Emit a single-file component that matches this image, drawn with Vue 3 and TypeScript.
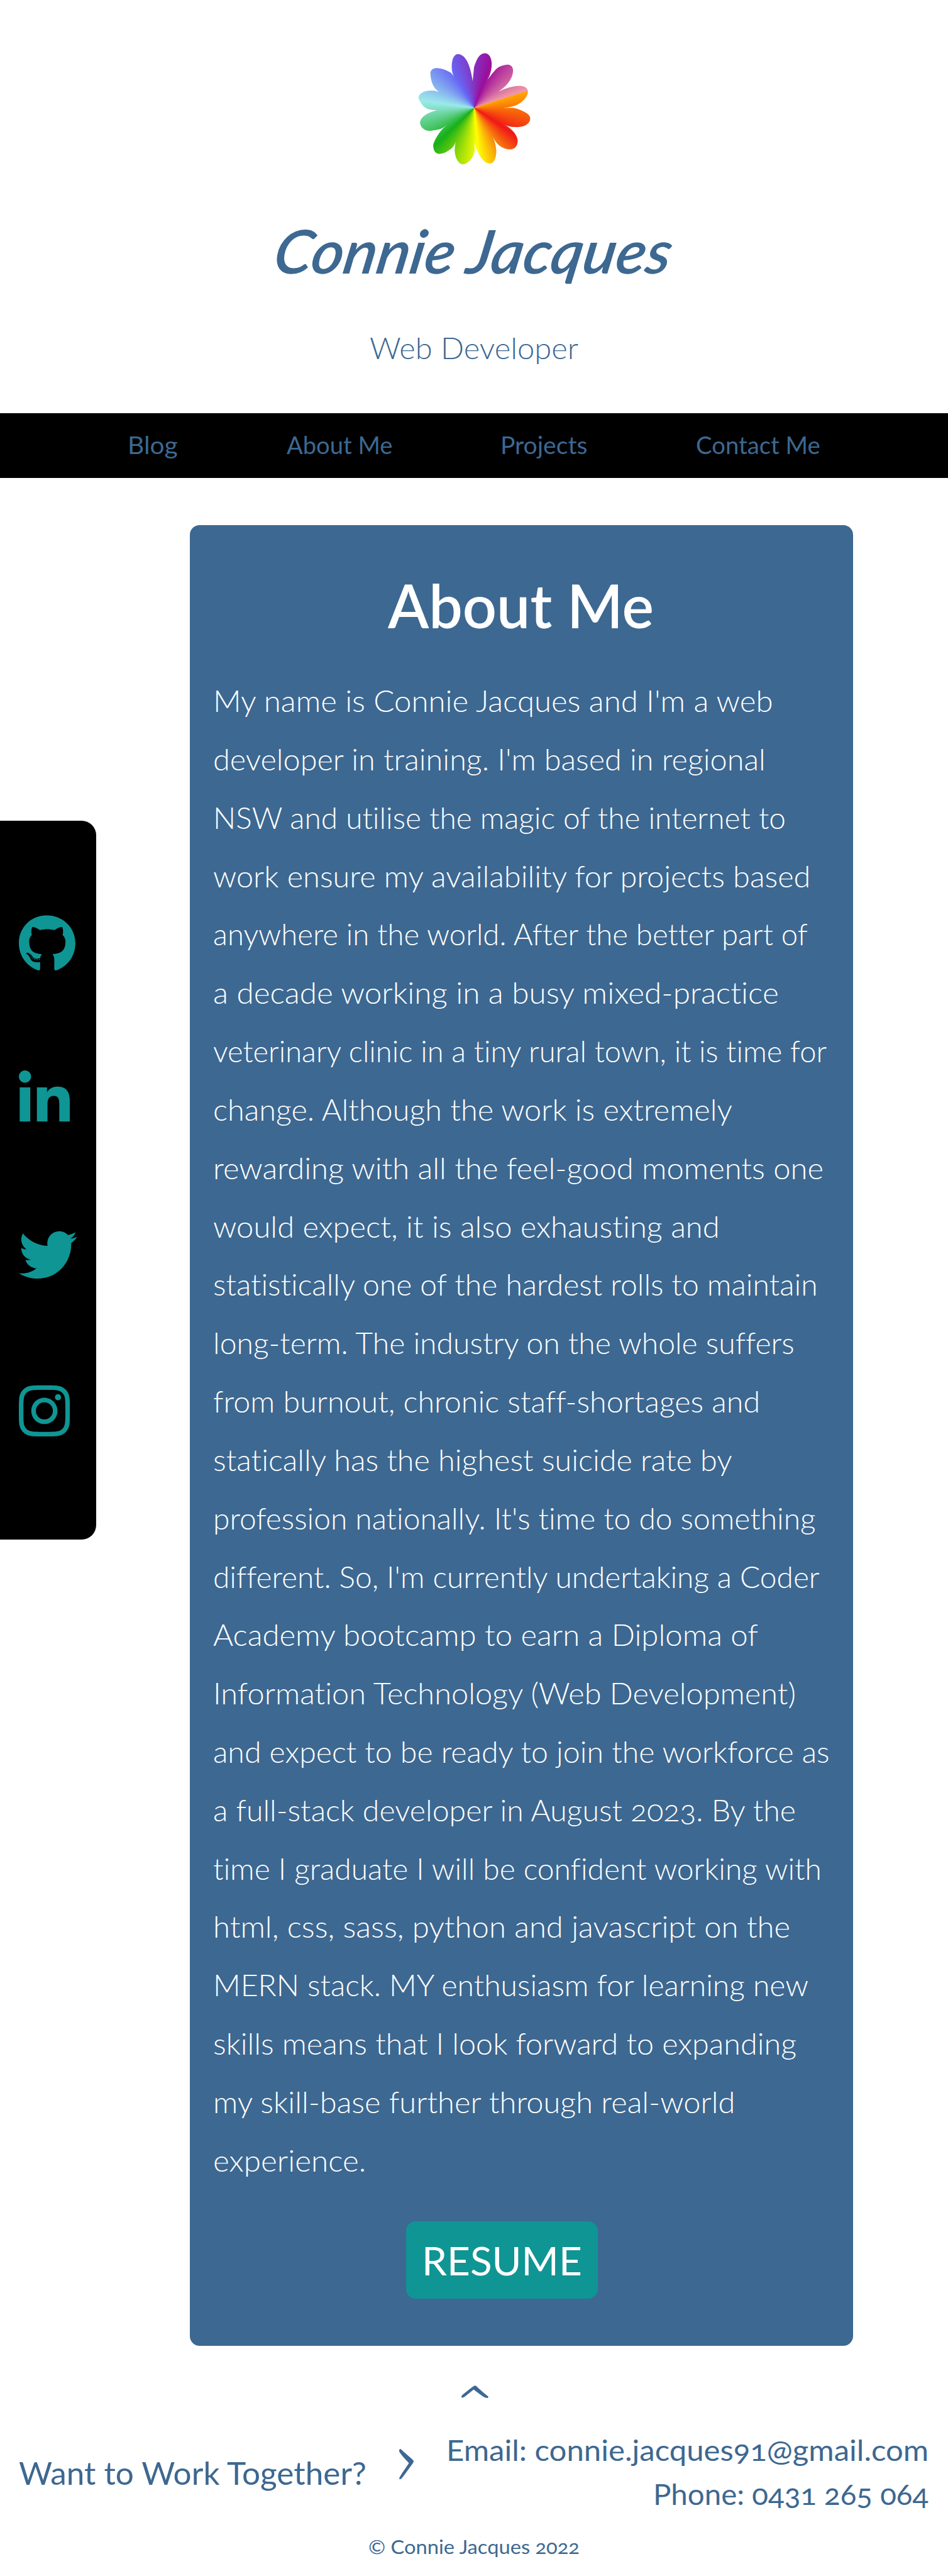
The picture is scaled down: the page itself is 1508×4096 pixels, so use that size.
<script setup lang="ts">
import type { Directive } from 'vue'

interface Line {
  text: string
  width: number
}

interface Social {
  name: string
  viewBox: string
  width: number
  path: string
}

// Widens (or narrows) the letters of a run of text so that it fills the given measure.
const vFit: Directive<HTMLElement, number> = {
  mounted(el, binding) {
    const natural = el.offsetWidth
    el.style.width = `${binding.value}px`
    el.style.transform = `scaleX(${(binding.value / natural).toFixed(4)})`
  },
}

const nav: Line[] = [
  { text: 'Blog', width: 80 },
  { text: 'About Me', width: 168 },
  { text: 'Projects', width: 138 },
  { text: 'Contact Me', width: 198 },
]

const about: Line[] = [
  { text: "My name is Connie Jacques and I'm a web", width: 891 },
  { text: "developer in training. I'm based in regional", width: 879 },
  { text: 'NSW and utilise the magic of the internet to', width: 911 },
  { text: 'work ensure my availability for projects based', width: 950 },
  { text: 'anywhere in the world. After the better part of', width: 946 },
  { text: 'a decade working in a busy mixed-practice', width: 900 },
  { text: 'veterinary clinic in a tiny rural town, it is time for', width: 976 },
  { text: 'change. Although the work is extremely', width: 826 },
  { text: 'rewarding with all the feel-good moments one', width: 971 },
  { text: 'would expect, it is also exhausting and', width: 806 },
  { text: 'statistically one of the hardest rolls to maintain', width: 962 },
  { text: 'long-term. The industry on the whole suffers', width: 925 },
  { text: 'from burnout, chronic staff-shortages and', width: 870 },
  { text: 'statically has the highest suicide rate by', width: 826 },
  { text: "profession nationally. It's time to do something", width: 959 },
  { text: "different. So, I'm currently undertaking a Coder", width: 965 },
  { text: 'Academy bootcamp to earn a Diploma of', width: 867 },
  { text: 'Information Technology (Web Development)', width: 927 },
  { text: 'and expect to be ready to join the workforce as', width: 981 },
  { text: 'a full-stack developer in August 2023. By the', width: 927 },
  { text: 'time I graduate I will be confident working with', width: 968 },
  { text: 'html, css, sass, python and javascript on the', width: 918 },
  { text: 'MERN stack. MY enthusiasm for learning new', width: 947 },
  { text: 'skills means that I look forward to expanding', width: 928 },
  { text: 'my skill-base further through real-world', width: 830 },
  { text: 'experience.', width: 243 },
]

const socials: Social[] = [
  {
    name: 'GitHub',
    viewBox: '0 0 496 512',
    width: 89.9,
    path: 'M165.9 397.4c0 2-2.3 3.6-5.2 3.6-3.3.3-5.6-1.3-5.6-3.6 0-2 2.3-3.6 5.2-3.6 3-.3 5.6 1.3 5.6 3.6zm-31.1-4.5c-.7 2 1.3 4.3 4.3 4.9 2.6 1 5.6 0 6.2-2s-1.3-4.3-4.3-5.2c-2.6-.7-5.5.3-6.2 2.3zm44.2-1.7c-2.9.7-4.9 2.6-4.6 4.9.3 2 2.9 3.3 5.9 2.6 2.9-.7 4.9-2.6 4.6-4.6-.3-1.9-3-3.2-5.9-2.9zM244.8 8C106.1 8 0 113.3 0 252c0 110.9 69.8 205.8 169.5 239.2 12.8 2.3 17.3-5.6 17.3-12.1 0-6.2-.3-40.4-.3-61.4 0 0-70 15-84.7-29.8 0 0-11.4-29.1-27.8-36.6 0 0-22.9-15.7 1.6-15.4 0 0 24.9 2 38.6 25.8 21.9 38.6 58.6 27.5 72.9 20.9 2.3-16 8.8-27.1 16-33.7-55.9-6.2-112.3-14.3-112.3-110.5 0-27.5 7.6-41.3 23.6-58.9-2.6-6.5-11.1-33.3 2.6-67.9 20.9-6.5 69 27 69 27 20-5.6 41.5-8.5 62.8-8.5s42.8 2.9 62.8 8.5c0 0 48.1-33.6 69-27 13.7 34.7 5.2 61.4 2.6 67.9 16 17.7 25.8 31.5 25.8 58.9 0 96.5-58.9 104.2-114.8 110.5 9.2 7.9 17 22.9 17 46.4 0 33.7-.3 75.4-.3 83.6 0 6.5 4.6 14.4 17.3 12.1C428.2 457.8 496 362.9 496 252 496 113.3 383.5 8 244.8 8zM97.2 352.9c-1.3 1-1 3.3.7 5.2 1.6 1.6 3.9 2.3 5.2 1 1.3-1 1-3.3-.7-5.2-1.6-1.6-3.9-2.3-5.2-1zm-10.8-8.1c-.7 1.3.3 2.9 2.3 3.9 1.6 1 3.6.7 4.3-.7.7-1.3-.3-2.9-2.3-3.9-2-.6-3.6-.3-4.3.7zm32.4 35.6c-1.6 1.3-1 4.3 1.3 6.2 2.3 2.3 5.2 2.6 6.5 1 1.3-1.3.7-4.3-1.3-6.2-2.2-2.3-5.2-2.6-6.5-1zm-11.4-14.7c-1.6 1-1.6 3.6 0 5.9 1.6 2.3 4.3 3.3 5.6 2.3 1.6-1.3 1.6-3.9 0-6.2-1.4-2.3-4-3.3-5.6-2z',
  },
  {
    name: 'LinkedIn',
    viewBox: '0 0 448 512',
    width: 81.2,
    path: 'M100.28 448H7.4V148.9h92.88zM53.79 108.1C24.09 108.1 0 83.5 0 53.8a53.79 53.79 0 0 1 107.58 0c0 29.7-24.1 54.3-53.79 54.3zM447.9 448h-92.68V302.4c0-34.7-.7-79.2-48.29-79.2-48.29 0-55.69 37.7-55.69 76.7V448h-92.78V148.9h89.08v40.8h1.3c12.4-23.5 42.69-48.3 87.88-48.3 94 0 111.28 61.9 111.28 142.3V448z',
  },
  {
    name: 'Twitter',
    viewBox: '0 0 512 512',
    width: 92.8,
    path: 'M459.37 151.716c.325 4.548.325 9.097.325 13.645 0 138.72-105.583 298.558-298.558 298.558-59.452 0-114.68-17.219-161.137-47.106 8.447.974 16.568 1.299 25.34 1.299 49.055 0 94.213-16.568 130.274-44.832-46.132-.975-84.792-31.188-98.112-72.772 6.498.974 12.995 1.624 19.818 1.624 9.421 0 18.843-1.3 27.614-3.573-48.081-9.747-84.143-51.98-84.143-102.985v-1.299c13.969 7.797 30.214 12.67 47.431 13.319-28.264-18.843-46.781-51.005-46.781-87.391 0-19.492 5.197-37.36 14.294-52.954 51.655 63.675 129.3 105.258 216.365 109.807-1.624-7.797-2.599-15.918-2.599-24.04 0-57.828 46.782-104.934 104.934-104.934 30.213 0 57.502 12.67 76.67 33.137 23.715-4.548 46.456-13.32 66.599-25.34-7.798 24.366-24.366 44.833-46.132 57.827 21.117-2.273 41.584-8.122 60.426-16.243-14.292 20.791-32.161 39.308-52.628 54.253z',
  },
  {
    name: 'Instagram',
    viewBox: '0 0 448 512',
    width: 81.2,
    path: 'M224.1 141c-63.6 0-114.9 51.3-114.9 114.9s51.3 114.9 114.9 114.9S339 319.5 339 255.9 287.7 141 224.1 141zm0 189.6c-41.1 0-74.7-33.5-74.7-74.7s33.5-74.7 74.7-74.7 74.7 33.5 74.7 74.7-33.6 74.7-74.7 74.7zm146.4-194.3c0 14.9-12 26.8-26.8 26.8-14.9 0-26.8-12-26.8-26.8s12-26.8 26.8-26.8 26.8 12 26.8 26.8zm76.1 27.2c-1.7-35.9-9.9-67.7-36.2-93.9-26.2-26.2-58-34.4-93.9-36.2-37-2.1-147.9-2.1-184.9 0-35.8 1.7-67.6 9.9-93.9 36.1s-34.4 58-36.2 93.9c-2.1 37-2.1 147.9 0 184.9 1.7 35.9 9.9 67.7 36.2 93.9s58 34.4 93.9 36.2c37 2.1 147.9 2.1 184.9 0 35.9-1.7 67.7-9.9 93.9-36.2 26.2-26.2 34.4-58 36.2-93.9 2.1-37 2.1-147.8 0-184.8zM398.8 388c-7.8 19.6-22.9 34.7-42.6 42.6-29.5 11.7-99.5 9-132.1 9s-102.7 2.6-132.1-9c-19.6-7.8-34.7-22.9-42.6-42.6-11.7-29.5-9-99.5-9-132.1s-2.6-102.7 9-132.1c7.8-19.6 22.9-34.7 42.6-42.6 29.5-11.7 99.5-9 132.1-9s102.7-2.6 132.1 9c19.6 7.8 34.7 22.9 42.6 42.6 11.7 29.5 9 99.5 9 132.1s2.7 102.7-9 132.1z',
  },
]
</script>

<template>
  <div class="page">
    <header class="header">
      <svg class="logo" viewBox="0 0 1140 1020" aria-label="Logo">
        <defs>
          <clipPath id="petals">
            <path
              d="M558 303C562 270 565 230 568 200C580 165 600 95 650 95C690 98 699 150 699 175C699 215 690 255 668 293C700 250 730 210 755 197C780 186 800 181 820 180C845 183 860 200 857 235C850 275 835 300 815 322C800 345 770 362 752 382C780 362 850 337 905 337C945 337 967 355 967 380C967 405 955 420 945 433C915 465 890 478 870 484C840 495 810 498 787 502C820 500 840 500 860 501C900 508 940 528 965 545C980 558 985 570 985 582C980 615 955 628 935 636C910 643 890 645 870 643C840 641 820 635 797 628C830 640 880 690 888 725C900 765 880 808 833 808C770 805 730 765 705 710C725 755 733 790 733 830C730 880 715 912 683 913C640 912 605 850 595 820C582 800 575 775 572 750C572 780 574 800 573 820C562 870 530 915 483 919C440 910 425 850 425 810C426 785 430 760 437 738C430 770 410 800 385 812C360 832 335 840 308 841C270 835 266 800 266 770C280 730 300 700 325 668C340 650 355 635 375 620C350 640 335 650 320 657C300 662 270 670 240 671C195 670 168 640 168 605C175 575 200 555 230 540C265 523 310 510 345 507C310 515 285 518 265 517C225 512 200 500 180 470C165 450 157 435 157 420C165 395 190 378 240 373C280 372 310 380 350 402C320 395 290 370 275 350C255 320 245 280 245 240C250 215 270 205 295 206C340 210 370 225 395 240C415 258 425 280 440 310C425 285 403 245 403 200C403 140 420 103 450 103C490 105 515 145 530 185C543 220 552 260 558 303Z"
            />
          </clipPath>
        </defs>
        <g clip-path="url(#petals)">
          <foreignObject x="0" y="0" width="1140" height="1020">
            <div class="wheel"></div>
          </foreignObject>
        </g>
      </svg>
      <h1 class="name"><span v-fit="632">Connie Jacques</span></h1>
      <p class="role"><span v-fit="332">Web Developer</span></p>
    </header>

    <nav class="nav">
      <a v-for="item in nav" :key="item.text"><span v-fit="item.width">{{ item.text }}</span></a>
    </nav>

    <main class="main">
      <aside class="social">
        <svg
          v-for="s in socials"
          :key="s.name"
          :viewBox="s.viewBox"
          :width="s.width"
          height="92.8"
          :aria-label="s.name"
        >
          <path :d="s.path" />
        </svg>
      </aside>

      <section class="card">
        <h2 class="title"><span v-fit="423">About Me</span></h2>
        <p class="about">
          <span v-for="line in about" :key="line.text" v-fit="line.width" class="line">{{ line.text }}</span>
        </p>
        <a class="resume"><span v-fit="255">RESUME</span></a>
      </section>
    </main>

    <footer class="footer">
      <svg class="up" viewBox="0 0 67 31">
        <path d="M1 30C-1 28 0 26 3 23C12 15 23 7 31 1Q34-1 37 2C45 10 56 19 66 27Q67 30 65 31C60 31 55 29 50 25L30 10C22 17 14 23 8 28Q4 31 1 30Z" />
      </svg>
      <div class="contact">
        <p class="ask"><span v-fit="553">Want to Work Together?</span></p>
        <svg class="next" viewBox="0 0 36 75">
          <path d="M3 0C0 1-1 4 1 8C7 18 17 26 24 35C16 47 8 58 1 70Q-1 75 2 75C5 75 7 71 10 68L34 35Q37 30 34 27C24 17 13 9 5 1Z" />
        </svg>
        <div class="details">
          <p><span v-fit="767">Email: connie.jacques91@gmail.com</span></p>
          <p><span v-fit="438">Phone: 0431 265 064</span></p>
        </div>
      </div>
      <p class="copyright"><span v-fit="336">© Connie Jacques 2022</span></p>
    </footer>
  </div>
</template>

<style>
body {
  margin: 0;
  background: #fff;
}
</style>

<style scoped>
.page {
  width: 1508px;
  height: 4096px;
  overflow: hidden;
  background: #fff;
  color: #3d6891;
  font-family: Lato, 'Open Sans', sans-serif;
  font-variant-ligatures: none;
  font-variant-numeric: oldstyle-nums;
}

h1,
h2,
p {
  margin: 0;
  font-weight: 400;
}

span {
  display: inline-block;
  text-align: left;
  transform-origin: 0 50%;
  white-space: nowrap;
}

.header {
  display: flex;
  flex-direction: column;
  align-items: center;
  box-sizing: border-box;
  height: 656.5px;
  padding-top: 64.4px;
}

.logo {
  flex: none;
  width: 244.9px;
  height: 219.1px;
}

.wheel {
  width: 1140px;
  height: 1020px;
  background: conic-gradient(
    from 72.2deg at 570px 501px,
    #ffa500 0deg,
    #f01717 51.4deg,
    #ffff00 102.9deg,
    #17b017 154.3deg,
    #9be9ea 205.7deg,
    #6666f5 257.1deg,
    #9b0d9b 308.6deg,
    #f29ba5 360deg
  );
}

.name {
  margin-top: 50px;
  font-size: 96px;
  font-style: italic;
  font-weight: 600;
  line-height: 130px;
  transform: skewX(-10deg);
}

.role {
  margin-top: 60px;
  font-size: 46.4px;
  font-weight: 300;
  line-height: 60px;
}

.nav {
  display: flex;
  justify-content: space-between;
  align-items: flex-start;
  box-sizing: border-box;
  height: 103.5px;
  padding: 26.5px 203px 0 203px;
  background: #000;
  font-size: 37.7px;
  line-height: 50px;
}

.main {
  display: flex;
  align-items: flex-start;
  padding-top: 75.4px;
}

.social {
  display: flex;
  flex-direction: column;
  gap: 154.8px;
  box-sizing: border-box;
  width: 152.7px;
  height: 1142.3px;
  margin-top: 470px;
  padding: 148.8px 0 0 30.2px;
  border-radius: 0 23.2px 23.2px 0;
  background: #000;
}

.social svg {
  flex: none;
  fill: #0f9594;
}

.card {
  display: flex;
  flex-direction: column;
  align-items: flex-start;
  box-sizing: border-box;
  width: 1055.6px;
  height: 2895px;
  margin-left: 148.9px;
  padding: 75px 0 0 37px;
  border-radius: 15.5px;
  background: #3d6891;
  color: #fff;
}

.title {
  width: 980px;
  font-size: 96.7px;
  font-weight: 600;
  line-height: 104px;
  text-align: center;
}

.about {
  display: flex;
  flex-direction: column;
  align-items: flex-start;
  margin-top: 53.7px;
  font-size: 46.4px;
  font-weight: 300;
  line-height: 92.83px;
}

.resume {
  box-sizing: border-box;
  width: 305px;
  height: 123px;
  margin: 50px 0 0 307px;
  border-radius: 15.5px;
  background: #0f9594;
  font-size: 61.9px;
  line-height: 124px;
  text-align: center;
}

.footer {
  display: flex;
  flex-direction: column;
  align-items: center;
}

.footer svg {
  fill: #3d6891;
}

.up {
  width: 43.2px;
  height: 20px;
  margin: 63px 0 0 4px;
}

.contact {
  display: flex;
  align-items: flex-start;
  box-sizing: border-box;
  width: 100%;
  padding: 48px 31px 0 30px;
}

.ask {
  margin-top: 41px;
  font-size: 50.3px;
  line-height: 60px;
}

.next {
  width: 23.2px;
  height: 48.3px;
  margin: 33px 0 0 52px;
}

.details {
  flex: 1;
  font-size: 46.4px;
  line-height: 69.6px;
  text-align: right;
}

.copyright {
  margin-top: 28px;
  font-size: 31px;
  line-height: 40px;
}
</style>
